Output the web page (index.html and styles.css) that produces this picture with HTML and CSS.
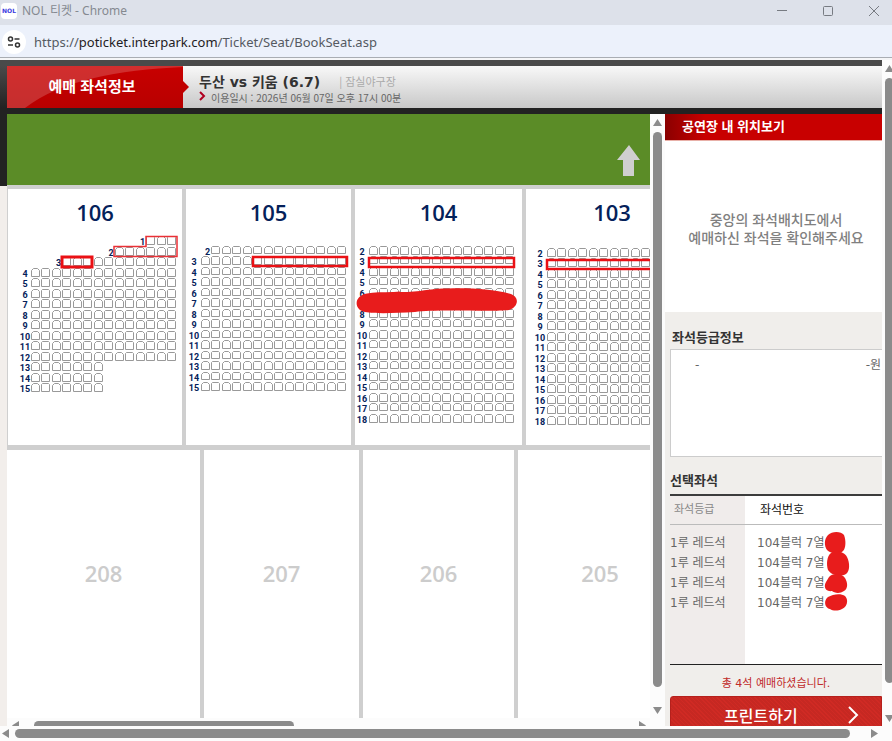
FILE: index.html
```html
<!DOCTYPE html>
<html lang="ko">

<head>
  <meta charset="UTF-8">
  <meta name="viewport" content="width=device-width, initial-scale=1.0">
  <title>NOL 티켓</title>
  <link rel="stylesheet" href="styles.css">
</head>

<body>
  <div class="titlebar">
    <span class="favicon">NOL</span>
    <span class="window-title">NOL 티켓 - Chrome</span>
    <div class="window-buttons">
      <button aria-label="최소화"><svg width="12" height="12"><path d="M1 5.5h10" /></svg></button>
      <button aria-label="최대화"><svg width="12" height="12"><rect x="1.5" y="1.5" width="9" height="9" rx="1" /></svg></button>
      <button aria-label="닫기"><svg width="12" height="12"><path d="M1 1l10 10M11 1L1 11" /></svg></button>
    </div>
  </div>

  <div class="addressbar">
    <button class="site-info" aria-label="사이트 정보 보기">
      <svg width="14" height="14"><circle cx="3.5" cy="4" r="2" /><path d="M7.500 4h5M1 10h5" /><circle cx="10.500" cy="10" r="2" /></svg>
    </button>
    <p class="url">https://<b>poticket.interpark.com</b>/Ticket/Seat/BookSeat.asp</p>
  </div>

  <div class="frame">
    <div class="page">
      <header class="header">
        <div class="header-tab">
          <svg class="header-gloss" viewBox="0 0 176 42" preserveAspectRatio="none"><path d="M0 0H176V1C110 4 55 14 18 42H0z" /></svg>
          <h1>예매 좌석정보</h1>
        </div>
        <div class="game">
          <div class="game-name"><strong>두산 vs 키움 (6.7)</strong><span>| 잠실야구장</span></div>
          <div class="game-date">
            <svg width="8" height="10"><path d="M1 1l4 4-4 4" /></svg>
            <span>이용일시 : 2026년 06월 07일 오후 17시 00분</span>
          </div>
        </div>
      </header>

      <main class="content">
        <section class="map-pane">
          <div class="map-view">
            <div class="map">
              <div class="field">
                <svg width="24" height="32"><path d="M12 0l11 15h-6v16H6V15H0z" /></svg>
              </div>
              <div class="blocks lower">
                <section class="block">
                  <h2>106</h2>
                  <svg class="seats" data-x="23" data-y="1.500" data-label="17"
                    data-rows="1:11-13,2:8-13,3:3-13,4-12:0-13,13-15:0-6">
                    <path class="mark thin" d="M138 1.500h31v20h-63v-10h32z" />
                    <rect class="mark thick" x="54" y="22" width="30" height="10" />
                  </svg>
                </section>
                <section class="block">
                  <h2>105</h2>
                  <svg class="seats" data-x="15" data-y="0.500" data-label="8" data-short="0"
                    data-rows="2:1-13,3-15:0-13">
                    <rect class="mark" x="67" y="22" width="94" height="9" />
                  </svg>
                </section>
                <section class="block">
                  <h2>104</h2>
                  <svg class="seats" data-x="14" data-y="0.500" data-label="7" data-short="1"
                    data-rows="2-18:0-13">
                    <rect class="mark" x="14" y="23" width="145" height="9" />
                    <path class="scribble" d="M12 58.500C25 56 50 58 65 56C85 52.500 115 53 130 54.500C140 55 148 57 154 58.500C165 61 164 72 154 75C140 77 80 74 60 77C40 78 22 79 10 77C-1 75-2 61 12 58.500z" />
                  </svg>
                </section>
                <section class="block">
                  <h2>103</h2>
                  <svg class="seats" data-x="21" data-y="2.500" data-label="14"
                    data-rows="2-18:0-13">
                    <rect class="mark" x="21" y="25" width="147" height="9" />
                  </svg>
                </section>
              </div>
              <div class="blocks upper">
                <section class="block"><h2>208</h2></section>
                <section class="block"><h2>207</h2></section>
                <section class="block"><h2>206</h2></section>
                <section class="block"><h2>205</h2></section>
              </div>
            </div>
          </div>
          <div class="scroll-y">
            <i class="arrow up"></i><i class="thumb"></i><i class="arrow down"></i>
          </div>
          <div class="scroll-x">
            <i class="arrow left"></i><i class="thumb"></i><i class="arrow right"></i>
          </div>
        </section>

        <aside class="side">
          <h2 class="side-title">공연장 내 위치보기</h2>
          <p class="guide">중앙의 좌석배치도에서<br>예매하신 좌석을 확인해주세요</p>

          <h3 class="grade-title">좌석등급정보</h3>
          <div class="grade-box"><span>-</span><span>-원</span></div>

          <h3 class="picked-title">선택좌석</h3>
          <div class="picked">
            <table>
              <thead>
                <tr><th>좌석등급</th><th>좌석번호</th></tr>
              </thead>
              <tbody>
                <tr><td>1루 레드석</td><td>104블럭 7열</td></tr>
                <tr><td>1루 레드석</td><td>104블럭 7열</td></tr>
                <tr><td>1루 레드석</td><td>104블럭 7열</td></tr>
                <tr><td>1루 레드석</td><td>104블럭 7열</td></tr>
              </tbody>
            </table>
            <svg class="picked-cover" width="26" height="80">
              <path d="M4 4C8 0 17 0 20 4C22 9 22 17 19 20C15 24 7 23 3 19C0 15 0 8 4 4z" />
              <path d="M7 22C12 19 21 21 23 26C26 32 26 40 22 43C17 46 8 45 4 39C2 33 3 25 7 22z" />
              <path d="M5 46C8 42 18 42 21 47C24 52 24 58 20 60C16 63 10 62 8 60C2 61-1 56 2 51z" />
              <path d="M4 66C9 63 17 62 21 65C25 69 23 76 18 78C14 80 9 80 6 78C1 77-1 70 4 66z" />
            </svg>
          </div>

          <p class="total">총 4석 예매하셨습니다.</p>
          <button class="print">
            <span>프린트하기</span>
            <svg width="12" height="20"><path d="M2 2l8 8-8 8" /></svg>
          </button>
        </aside>
      </main>
    </div>

    <div class="scroll-y">
      <i class="arrow up"></i><i class="thumb"></i><i class="arrow down"></i>
    </div>
    <div class="scroll-x">
      <i class="arrow left"></i><i class="thumb"></i><i class="arrow right"></i>
    </div>
  </div>

  <script src="seats.js"></script>
</body>

</html>
```

FILE: styles.css
```css
* {
  box-sizing: border-box;
}

body {
  margin: 0;
  height: 100vh;
  display: flex;
  flex-direction: column;
  overflow: hidden;
  font-family: 'DejaVu Sans', 'Noto Sans CJK KR', sans-serif;
  font-size: 12px;
  color: #666;
  background: #fcfcfc;
}

h1, h2, h3, p {
  margin: 0;
}

h1, h2, h3 {
  font-family: 'Noto Sans CJK KR', sans-serif;
}

button {
  margin: 0;
  padding: 0;
  border: 0;
  background: none;
  cursor: pointer;
}

svg {
  display: block;
  flex: none;
}

/* browser window */
.titlebar {
  flex: none;
  display: flex;
  align-items: center;
  height: 25px;
  padding: 0 12px 4px 1px;
  background: #dde1ea;
}

.favicon {
  width: 16px;
  height: 16px;
  border-radius: 4px;
  background: #fff;
  color: #3a3ae0;
  font: bold 6px/16px 'DejaVu Sans', sans-serif;
  text-align: center;
}

.window-title {
  margin-left: 5px;
  font: 12px/20px 'Noto Sans', 'Noto Sans CJK KR', sans-serif;
  color: #858990;
}

.window-buttons {
  display: flex;
  gap: 34px;
  margin-left: auto;
}

.window-buttons svg {
  fill: none;
  stroke: #777b82;
}

.addressbar {
  flex: none;
  display: flex;
  align-items: center;
  gap: 8px;
  height: 35px;
  padding: 0 2px;
  background: #ecf1fb;
  border-bottom: 2px solid #f4f5f7;
  box-shadow: inset 0 -1px #a9adb3;
}

.site-info {
  display: flex;
  align-items: center;
  justify-content: center;
  width: 24px;
  height: 24px;
  border-radius: 50%;
  background: #fff;
}

.site-info svg {
  fill: none;
  stroke: #333;
  stroke-width: 1.5;
}

.url {
  font: 13px/20px 'Noto Sans', sans-serif;
  color: #555a62;
}

.url b {
  font-weight: normal;
  color: #1f2023;
}

.frame {
  flex: 1;
  min-height: 0;
  display: grid;
  grid-template: minmax(0, 1fr) 15px / minmax(0, 1fr) 10px;
}

/* scrollbars */
.scroll-x,
.scroll-y {
  display: flex;
  align-items: center;
  overflow: hidden;
  background: #fcfcfc;
}

.scroll-y {
  flex-direction: column;
}

.thumb {
  flex: none;
  border-radius: 5px;
  background: #8b8b8b;
}

.arrow {
  flex: none;
  background: #8b8b8b;
}

.up, .down {
  width: 9px;
  height: 7px;
}

.left, .right {
  width: 7px;
  height: 9px;
}

.up { clip-path: polygon(50% 0, 100% 100%, 0 100%); }
.down { clip-path: polygon(0 0, 100% 0, 50% 100%); }
.left { clip-path: polygon(100% 0, 100% 100%, 0 50%); }
.right { clip-path: polygon(0 0, 100% 50%, 0 100%); }

.frame > .scroll-y {
  align-items: flex-start;
  gap: 6px;
  padding: 5px 0 4px 3px;
}

.frame > .scroll-y .thumb {
  flex: 1;
  width: 9px;
  margin-bottom: 26px;
}

.frame > .scroll-x {
  grid-column: 1 / -1;
  padding: 0 14px 0 2px;
  gap: 6px;
}

.frame > .scroll-x .thumb {
  flex: 1;
  height: 9px;
  margin-right: 15px;
}

/* page */
.page {
  min-width: 0;
  padding: 6px 0 0 7px;
  overflow: hidden;
  display: flex;
  flex-direction: column;
  background: #f2eeeb linear-gradient(#4a4a4a 6px, #222 48px) no-repeat 0 0 / 100% 126px;
}

.header {
  flex: none;
  display: flex;
  height: 42px;
  margin-bottom: 6px;
  background: linear-gradient(#f8f8f8, #c8c8c8);
}

.header-tab {
  position: relative;
  width: 176px;
  background: linear-gradient(#c80000, #b80000);
}

.header-tab::after {
  content: "";
  position: absolute;
  top: 15px;
  left: 100%;
  border: 6px solid transparent;
  border-left-color: #c00000;
  border-right: 0;
}

.header-gloss {
  position: absolute;
  width: 100%;
  height: 100%;
  fill: #fff;
  fill-opacity: .18;
}

.header h1 {
  position: relative;
  padding-right: 6px;
  font-size: 15px;
  line-height: 40px;
  text-align: center;
  color: #fff;
}

.game {
  padding: 5px 0 0 16px;
}

.game-name {
  display: flex;
  align-items: center;
  gap: 19px;
  height: 20px;
}

.game-name strong {
  font-size: 14px;
  color: #333;
}

.game-name span {
  font: 11px/20px 'Noto Sans CJK KR', sans-serif;
  color: #aaa;
}

.game-date {
  display: flex;
  gap: 4px;
  font: 10px/14px 'Noto Sans CJK KR', sans-serif;
}

.game-date svg {
  fill: none;
  stroke: #b00020;
  stroke-width: 2;
}

.content {
  flex: 1;
  min-height: 0;
  display: flex;
}

/* seat map */
.map-pane {
  flex: 1;
  min-width: 0;
  display: grid;
  grid-template: minmax(0, 1fr) 8px / minmax(0, 1fr) 15px;
  background: #fcfcfc;
}

.map-view {
  overflow: hidden;
}

.map-pane .scroll-y {
  gap: 6px;
  padding: 5px 0 4px;
}

.map-pane .scroll-y .thumb {
  flex: 1;
  width: 9px;
  margin-bottom: 14px;
}

.map-pane .scroll-x {
  align-items: flex-start;
  padding: 3px 4px 0 5px;
}

.map-pane .scroll-x .thumb {
  width: 41%;
  height: 9px;
  margin: 0 auto 0 15px;
}

.map {
  width: 1000px;
  background: #cfcfcf;
}

.field {
  height: 71px;
  padding: 31px 0 0 610px;
  background: #5b8c27;
}

.field svg {
  fill: #cfcfcf;
}

.blocks {
  display: grid;
  gap: 4px;
}

.lower {
  grid-template-columns: 174px 165px 167px 172px 1fr;
  padding: 4px 0 5px 1px;
}

.upper {
  grid-template-columns: 193px 155px 151px 164px 1fr;
}

.block {
  background: #fff;
}

.block h2 {
  font: 600 22px/46px 'Open Sans', 'Noto Sans', sans-serif;
  text-align: center;
  color: #04215a;
}

.upper .block {
  height: 300px;
  padding-top: 100px;
}

.upper .block h2 {
  color: #ccc;
}

.seats {
  width: 100%;
  height: 210px;
  overflow: visible;
}

.seat {
  fill: #fff;
  stroke: #999;
}

.row-no {
  font: bold 9px Roboto, sans-serif;
  text-anchor: middle;
  fill: #04215a;
}

.mark {
  fill: none;
  stroke: #ea1014;
  stroke-width: 2.5;
}

.mark.thin {
  stroke: #ea3036;
  stroke-width: 1.5;
}

.mark.thick {
  stroke-width: 3;
}

.scribble,
.picked-cover {
  fill: #e81c1c;
}

/* right column */
.side {
  flex: none;
  width: 217px;
  overflow: hidden;
  background: #f0eeeb;
}

.side-title {
  height: 27px;
  padding-left: 17px;
  border-bottom: 1px solid #e8b0a8;
  background: linear-gradient(90deg, #8a0000, #c80000 40px);
  font-size: 13px;
  line-height: 24px;
  color: #fff;
}

.guide {
  height: 171px;
  padding: 69px 0 0 5px;
  background: #fff;
  font: 500 14px/18px 'Noto Sans CJK KR', sans-serif;
  text-align: center;
  color: #808080;
}

.grade-title,
.picked-title {
  padding-left: 5px;
  font-size: 13px;
  line-height: 20px;
  color: #333;
}

.grade-title {
  padding: 15px 0 2px 7px;
}

.grade-box {
  display: flex;
  justify-content: space-between;
  height: 108px;
  margin-left: 5px;
  padding: 6px 1px 0 24px;
  border: 1px solid #ccc;
  border-right: 0;
  background: #fff;
  line-height: 18px;
}

.picked-title {
  margin: 13px 0 4px;
}

.picked {
  position: relative;
  height: 171px;
  margin-left: 5px;
  border-top: 2px solid #3c3c3c;
  border-bottom: 1px solid #222;
  background: linear-gradient(90deg, #f0eceb 75px, #fff 75px);
}

.picked table {
  width: 100%;
  border-collapse: collapse;
  table-layout: fixed;
}

.picked thead tr {
  height: 28px;
  border-bottom: 1px solid #bbb;
}

.picked tbody::before {
  content: "";
  display: block;
  height: 8px;
}

.picked th,
.picked td {
  padding: 0;
  font-weight: normal;
  line-height: 20px;
  text-align: left;
}

.picked th:first-child {
  width: 75px;
  padding-left: 4px;
  font-size: 11px;
  color: #888;
}

.picked th:last-child {
  padding-left: 15px;
  color: #111;
}

.picked td:last-child {
  padding-left: 12px;
}

.picked-cover {
  position: absolute;
  top: 35px;
  left: 154px;
}

.total {
  padding: 10px 0 0 5px;
  font-size: 11px;
  line-height: 18px;
  text-align: center;
  color: #c02a2a;
}

.print {
  display: flex;
  align-items: center;
  width: 212px;
  height: 38px;
  margin: 3px 0 0 5px;
  padding: 0 22px 0 53px;
  border: 1px solid #b5201c;
  border-radius: 3px 0 0 0;
  background: repeating-linear-gradient(45deg, #d02a24 0 1px, #c62822 1px 3px);
  font: 500 16px/20px 'Noto Sans CJK KR', sans-serif;
  color: #fff;
}

.print svg {
  margin-left: auto;
  fill: none;
  stroke: #fff;
  stroke-width: 2;
}
```

FILE: seats.js
```javascript
(function () {
  var NS = 'http://www.w3.org/2000/svg'
  var PITCH = 10.5

  function add(svg, name, attrs, text) {
    var el = document.createElementNS(NS, name)
    for (var key in attrs) el.setAttribute(key, attrs[key])
    if (text) el.textContent = text
    // keep the seats below the red marks
    svg.insertBefore(el, svg.querySelector('.mark'))
  }

  function range(str) {
    var parts = str.split('-').map(Number)
    return parts.length > 1 ? parts : [parts[0], parts[0]]
  }

  function seatPath(x, y, h, round) {
    var r = round ? 2 : 1
    return 'M' + (x + 0.5) + ' ' + (y + h - 0.5) +
      'v-' + (h - 1 - r) + 'l' + r + ' -' + r +
      'h' + (8 - r * 2) + 'l' + r + ' ' + r + 'v' + (h - 1 - r) + 'z'
  }

  function draw(svg) {
    var d = svg.dataset
    var x0 = Number(d.x)
    var y0 = Number(d.y)
    d.rows.split(',').forEach(function (item) {
      var rows = range(item.split(':')[0])
      var cols = range(item.split(':')[1])
      for (var r = rows[0]; r <= rows[1]; r++) {
        var y = Math.floor(y0 + (r - 1) * PITCH)
        var h = d.short && r % 2 === Number(d.short) ? 8 : 9
        var labelX = Number(d.label)
        // short rows carry their number right before the first seat
        if (cols[0] > 0) labelX = x0 + cols[0] * PITCH - 4
        add(svg, 'text', { 'class': 'row-no', x: labelX, y: y0 + (r - 1) * PITCH + 8.5 }, String(r))
        var path = ''
        for (var c = cols[0]; c <= cols[1]; c++) {
          path += seatPath(Math.floor(x0 + c * PITCH), y, h, c % 2 === 0)
        }
        add(svg, 'path', { 'class': 'seat', d: path })
      }
    })
  }

  document.querySelectorAll('.seats').forEach(draw)
})()
```
